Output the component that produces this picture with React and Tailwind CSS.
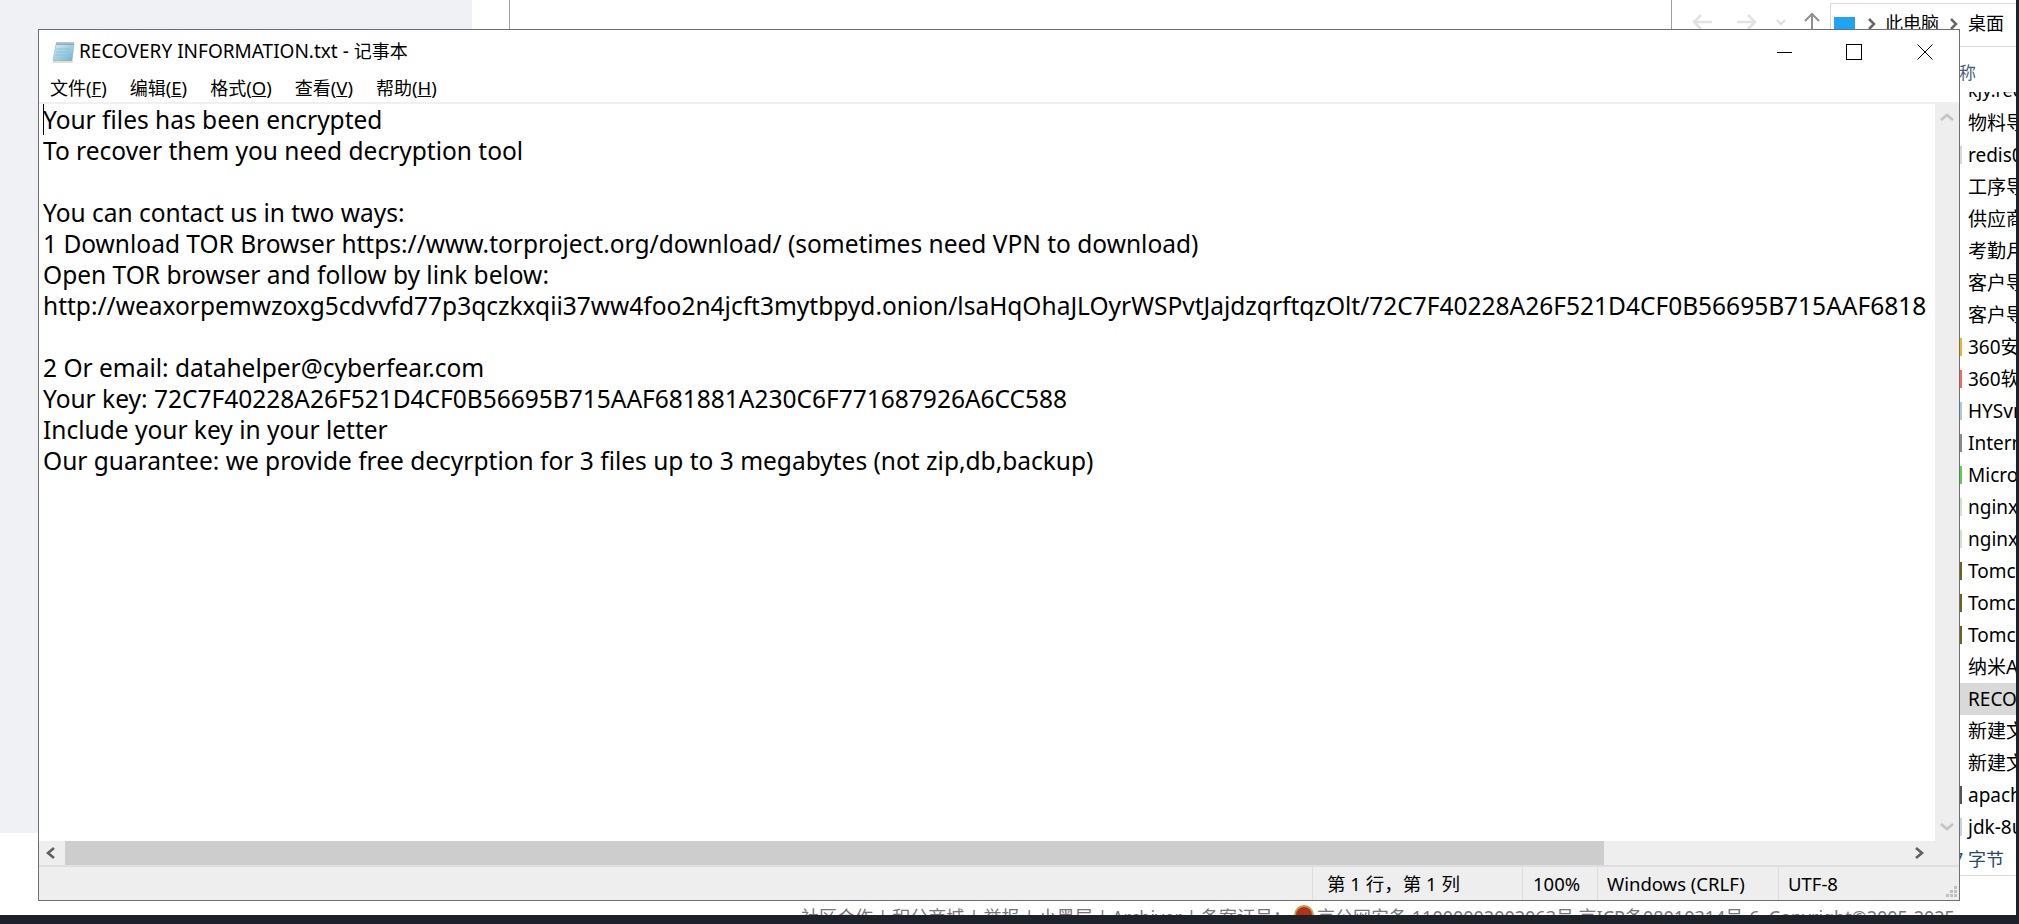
const FONT = "font-['Noto_Sans','Noto_Sans_CJK_SC',sans-serif]";

const noteLines = [
  'Your files has been encrypted',
  'To recover them you need decryption tool',
  '',
  'You can contact us in two ways:',
  '1 Download TOR Browser https://www.torproject.org/download/ (sometimes need VPN to download)',
  'Open TOR browser and follow by link below:',
  'http://weaxorpemwzoxg5cdvvfd77p3qczkxqii37ww4foo2n4jcft3mytbpyd.onion/lsaHqOhaJLOyrWSPvtJajdzqrftqzOlt/72C7F40228A26F521D4CF0B56695B715AAF681881A230C6F771687926A6CC588',
  '',
  '2 Or email: datahelper@cyberfear.com',
  'Your key: 72C7F40228A26F521D4CF0B56695B715AAF681881A230C6F771687926A6CC588',
  'Include your key in your letter',
  'Our guarantee: we provide free decyrption for 3 files up to 3 megabytes (not zip,db,backup)',
];

const menus = [
  ['文件', 'F'],
  ['编辑', 'E'],
  ['格式', 'O'],
  ['查看', 'V'],
  ['帮助', 'H'],
];

const files = [
  { name: '物料导入' },
  { name: 'redis0', icon: 'bg-[#d8d8d8]' },
  { name: '工序导入' },
  { name: '供应商' },
  { name: '考勤月' },
  { name: '客户导入' },
  { name: '客户导入' },
  { name: '360安全', icon: 'bg-[#e8b820]' },
  { name: '360软件', icon: 'bg-[#ee6a62]' },
  { name: 'HYSvr', icon: 'bg-[#a9c8e4]' },
  { name: 'Internet', icon: 'bg-[#8a8a8a]' },
  { name: 'Microsoft', icon: 'bg-[#58d050]' },
  { name: 'nginx', icon: 'bg-[#cfe3cf]' },
  { name: 'nginx', icon: 'bg-[#cfe3cf]' },
  { name: 'Tomcat', icon: 'bg-[#6b6320]' },
  { name: 'Tomcat', icon: 'bg-[#6b6320]' },
  { name: 'Tomcat', icon: 'bg-[#6b6320]' },
  { name: '纳米AI' },
  { name: 'RECOVERY', selected: true },
  { name: '新建文本' },
  { name: '新建文本' },
  { name: 'apache', icon: 'bg-[#555555]' },
  { name: 'jdk-8u', icon: 'bg-[#c4d4e4]' },
];

const NotepadIcon = () => (
  <svg width="24" height="23" viewBox="0 0 24 23">
    <defs>
      <linearGradient id="pad" x1="0" y1="0" x2="1" y2="1">
        <stop offset="0" stopColor="#d5edf7" />
        <stop offset="1" stopColor="#6fb0cc" />
      </linearGradient>
    </defs>
    <path d="M5 3h18l-2 17H2z" fill="url(#pad)" stroke="#8fb4c4" strokeWidth="0.6" />
    <path d="M2 20h19l.6-3 .4 5H2z" fill="#e6dfc8" />
    <path d="M5.500 8h14M5 11h14M4.600 14h14" stroke="#8cc0d8" strokeWidth="1" />
    <path d="M6 1v3M8 1v3M10 1v3M12 1v3M14 1v3M16 1v3M18 1v3M20 1v3M22 1v3" stroke="#7f8a90" strokeWidth="1" />
  </svg>
);

const Chevron = ({ dir, color }) => {
  const paths = {
    left: 'M9 2 3 7l6 5',
    right: 'M3 2l6 5-6 5',
    up: 'M1 9l6-5 6 5',
    down: 'M1 4l6 5 6-5',
  };
  return (
    <svg width="14" height="14" viewBox="0 0 14 14" fill="none">
      <path d={paths[dir]} stroke={color} strokeWidth="2.600" />
    </svg>
  );
};

const NavArrows = () => (
  <div className="flex items-center pl-[20px] pt-[15px] h-[29px]">
    <svg width="20" height="20" viewBox="0 0 20 20" fill="none" stroke="#e2e2e2" strokeWidth="2.500">
      <path d="M20 10H2M9 3l-7 7 7 7" />
    </svg>
    <svg className="ml-[25px]" width="20" height="20" viewBox="0 0 20 20" fill="none" stroke="#e2e2e2" strokeWidth="2.500">
      <path d="M0 10h18M11 3l7 7-7 7" />
    </svg>
    <svg className="ml-[19px]" width="10" height="10" viewBox="0 0 10 10" fill="none" stroke="#dddddd" strokeWidth="2">
      <path d="M1 3l4 4 4-4" />
    </svg>
    <svg className="ml-[18px]" width="16" height="20" viewBox="0 0 16 20" fill="none" stroke="#8f8f8f" strokeWidth="2">
      <path d="M8 20V3M1 9l7-7 7 7" />
    </svg>
  </div>
);

const Explorer = () => (
  <div className="flex-1 min-w-0 flex flex-col border-l border-[#a0a0a0] overflow-hidden">
    <div className="flex h-[47px] shrink-0">
      <div className="w-[158px]">
        <NavArrows />
      </div>
      <div className="flex-1 flex items-center mt-[3px] border border-b border-[#d9d9d9] border-r-0 pl-[3px] pb-[3px] text-[18px] text-black whitespace-nowrap overflow-hidden">
        <span className="w-[21px] h-[21px] mt-[8px] shrink-0 bg-[#1fa3f5]" />
        <svg className="ml-[12px] shrink-0" width="10" height="12" viewBox="0 0 10 12" fill="none" stroke="#666666" strokeWidth="2.500">
          <path d="M2 1l5 5-5 5" />
        </svg>
        <span className="ml-[8px]">此电脑</span>
        <svg className="ml-[10px] shrink-0" width="10" height="12" viewBox="0 0 10 12" fill="none" stroke="#666666" strokeWidth="2.500">
          <path d="M2 1l5 5-5 5" />
        </svg>
        <span className="ml-[9px]">桌面</span>
      </div>
      <div className="w-[3px]" />
    </div>
    <div className="pl-[287px] flex flex-col">
      <div className="h-[42px] pt-[14px] text-[17px] leading-[24px] text-[#4c607a]">称</div>
      <div className="h-[18px] pt-[3px]">
        <div className="h-[9px] overflow-hidden pl-[9px] text-[18px] leading-[18px] text-black">
          <div className="-mt-[11px]">kjy.rec</div>
        </div>
      </div>
      {files.map((f, i) => (
        <div key={i} className={`flex items-center h-8 text-[19px] text-black whitespace-nowrap overflow-hidden ${f.selected ? 'bg-[#d9d9d9]' : ''}`}>
          <span className={`w-[3px] h-[18px] mr-[6px] shrink-0 ${f.icon || ''}`} />
          <span>{f.name}</span>
        </div>
      ))}
      <div className="flex items-center h-[33px] text-[18px] text-[#2a4a6a] border-b border-[#d9d9d9] whitespace-nowrap">
        <span className="w-[9px] overflow-hidden">
          <span className="block -ml-[6px]">7</span>
        </span>
        <span>字节</span>
      </div>
    </div>
  </div>
);

const Notepad = () => (
  <div className={`absolute left-[38px] top-[29px] w-[1922px] h-[872px] flex flex-col bg-white border border-[#6f6f6f] text-black ${FONT}`}>
    <div className="flex items-center h-[44px] shrink-0 pl-[12px]">
      <NotepadIcon />
      <span className="ml-[4px] text-[19px] leading-[24px] -mt-[2px]">
        RECOVERY INFORMATION.txt - <span className="text-[18px]">记事本</span>
      </span>
      <div className="ml-auto flex items-center">
        <span className="w-[15px] h-[1px] bg-black mr-[54px]" />
        <span className="w-[16px] h-[16px] border border-black mr-[55px]" />
        <svg className="mr-[26px]" width="16" height="16" viewBox="0 0 16 16" stroke="black" strokeWidth="1">
          <path d="M.5.5l15 15M15.500.5l-15 15" />
        </svg>
      </div>
    </div>
    <div className="flex items-center gap-[23px] h-[28px] shrink-0 pl-[11px] text-[18px]">
      {menus.map((m, i) => (
        <span key={i}>
          {m[0]}
          <span className="text-[18.500px]">
            (<span className="underline">{m[1]}</span>)
          </span>
        </span>
      ))}
    </div>
    <div className="h-[2px] bg-[#f0f0f0] shrink-0" />
    <div className="flex h-[737px] shrink-0">
      <div className="relative flex-1 min-w-0 pl-[4px] pr-[8px]">
        <span className="absolute left-[4px] top-0 w-[1px] h-[31px] bg-black" />
        <div className="h-full overflow-hidden text-[24.500px] leading-[31px] whitespace-pre">
          {noteLines.map((line, i) => (
            <div key={i} className="h-[31px]">{line}</div>
          ))}
        </div>
      </div>
      <div className="w-[24px] shrink-0 bg-[#eeeeee] flex flex-col items-center justify-between py-[7px]">
        <Chevron dir="up" color="#c4c4c4" />
        <Chevron dir="down" color="#c4c4c4" />
      </div>
    </div>
    <div className="flex h-[24px] shrink-0 bg-[#eeeeee]">
      <div className="w-[26px] flex items-center justify-center">
        <Chevron dir="left" color="#606060" />
      </div>
      <div className="w-[1539px] bg-[#cdcdcd]" />
      <div className="flex-1 flex items-center justify-end pr-[32px]">
        <Chevron dir="right" color="#606060" />
      </div>
    </div>
    <div className="relative flex flex-1 min-h-0 bg-[#eeeeee] border-t-2 border-[#dedede] text-[18.500px] items-center">
      <div className="w-[1274px] h-full border-r border-[#dcdcdc]" />
      <div className="w-[210px] h-full pl-[14px] flex items-center border-r border-[#dcdcdc]">第 1 行，第 1 列</div>
      <div className="w-[75px] h-full pl-[10px] flex items-center border-r border-[#dcdcdc]">100%</div>
      <div className="w-[181px] h-full pl-[9px] flex items-center border-r border-[#dcdcdc]">Windows (CRLF)</div>
      <div className="pl-[9px]">UTF-8</div>
      <svg className="absolute right-[1px] bottom-[2px]" width="12" height="12" viewBox="0 0 12 12" fill="#c0c0c0">
        <rect x="8" y="0" width="3" height="3" />
        <rect x="4" y="4" width="3" height="3" />
        <rect x="8" y="4" width="3" height="3" />
        <rect x="0" y="8" width="3" height="3" />
        <rect x="4" y="8" width="3" height="3" />
        <rect x="8" y="8" width="3" height="3" />
      </svg>
    </div>
  </div>
);

const SiteFooter = () => (
  <div className="h-[15px] shrink-0 overflow-hidden flex items-start pl-[801px] pt-[5px] text-[18px] leading-[24px] text-[#777777] whitespace-pre">
    <span>社区合作 | 积分商城 | 举报 | 小黑屋 | Archiver | 备案证号：</span>
    <span className="w-[20px] h-[24px] mx-[3px] rounded-full bg-[#b5301f] border-2 border-[#c9a04a]" />
    <span>京公网安备 11000002002063号 京ICP备08010314号-6  Copyright©2005-2025</span>
  </div>
);

export default function App() {
  return (
    <div className={`relative w-[2019px] h-[924px] overflow-hidden bg-white flex flex-col ${FONT}`}>
      <div className="flex h-[900px] shrink-0">
        <div className="w-[472px] shrink-0">
          <div className="h-[833px] bg-[#f0f1f5]" />
        </div>
        <div className="w-[37px] shrink-0" />
        <div className="w-[1162px] shrink-0">
          <div className="h-[29px] border-l border-[#a0a0a0]" />
        </div>
        <Explorer />
      </div>
      <SiteFooter />
      <div className="flex-1 bg-[#1c2227]" />
      <div className="absolute right-0 top-0 w-[3px] h-full bg-[#1c2227]" />
      <Notepad />
    </div>
  );
}
